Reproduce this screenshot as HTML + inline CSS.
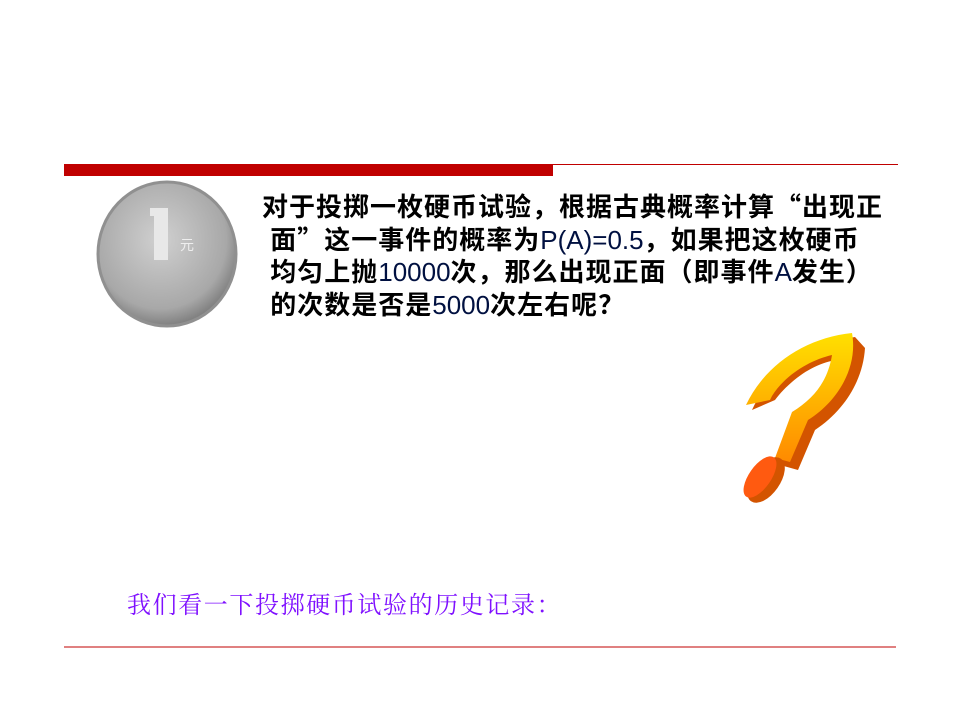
<!DOCTYPE html>
<html><head><meta charset="utf-8"><style>
body{margin:0;width:960px;height:720px;background:#fff;position:relative;overflow:hidden}
.t{position:absolute;left:262px;top:190px;font:bold 26px/32px "Liberation Sans","Noto Sans CJK SC",sans-serif;letter-spacing:1px;color:#000;white-space:nowrap}
.t span{font-weight:normal;color:#001040;letter-spacing:0}
.t i{font-style:normal;font-family:"Noto Sans CJK SC",sans-serif}
.p{position:absolute;left:127px;top:588px;font:24px/30px "Noto Serif CJK SC",serif;letter-spacing:1.6px;color:#7f10ff;white-space:nowrap}
</style></head><body>
<div style="position:absolute;left:64px;top:164px;width:489px;height:12px;background:#c00000"></div>
<div style="position:absolute;left:553px;top:164px;width:345px;height:1px;background:#c00000"></div>
<div style="position:absolute;left:64px;top:646px;width:832px;height:2px;background:#e08080"></div>
<svg style="position:absolute;left:0;top:0" width="960" height="720">
<defs>
<radialGradient id="c" cx="45%" cy="40%" r="60%"><stop offset="0" stop-color="#d0d0d0"/><stop offset="0.8" stop-color="#a8a8a8"/><stop offset="1" stop-color="#808080"/></radialGradient>
<linearGradient id="y" x1="0" y1="0" x2="0" y2="1"><stop offset="0" stop-color="#ffe000"/><stop offset="1" stop-color="#ff8a00"/></linearGradient>
</defs>
<ellipse cx="167" cy="254" rx="69" ry="72" fill="url(#c)" stroke="#909090" stroke-width="3"/>
<rect x="154" y="208" width="14" height="52" fill="#e8e8e8"/>
<rect x="150" y="208" width="8" height="8" fill="#e8e8e8"/>
<text x="180" y="250" font-size="14" fill="#eee" font-family="Noto Sans CJK SC">元</text>
<path d="M752,410 C770,370 810,343 855,337 L865,348 C863,380 845,410 815,430 L798,470 L780,465 L790,428 C820,405 835,385 838,360 C815,362 790,380 775,400 Z" fill="#d35400"/>
<path d="M746,405 C765,365 805,338 852,333 C858,365 840,400 808,420 L790,462 L775,458 L792,412 C815,398 828,380 832,355 C810,360 785,375 772,396 L770,400 Z" fill="url(#y)"/>
<ellipse cx="766" cy="480" rx="14" ry="26" transform="rotate(35 766 480)" fill="#d35400"/>
<ellipse cx="760" cy="477" rx="11" ry="24" transform="rotate(35 760 477)" fill="#ff5a10"/>
</svg>
<div class="t">对于投掷一枚硬币试验，根据古典概率计算<i>“</i>出现正<br>&nbsp;面<i>”</i>这一事件的概率为<span>P(A)=0.5</span>，如果把这枚硬币<br>&nbsp;均匀上抛<span>10000</span>次，那么出现正面（即事件<span>A</span>发生）<br>&nbsp;的次数是否是<span>5000</span>次左右呢<i>？</i></div>
<div class="p">我们看一下投掷硬币试验的历史记录：</div>
</body></html>
